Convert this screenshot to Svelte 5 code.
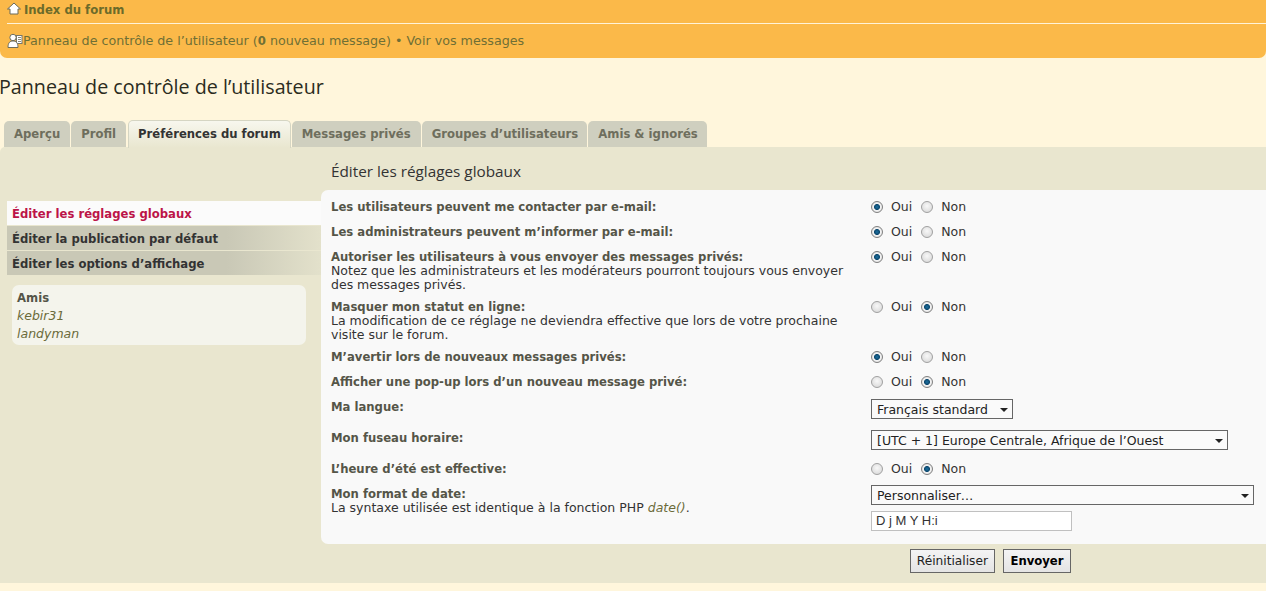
<script>
	const rows = [
		{ label: 'Les utilisateurs peuvent me contacter par e-mail:', kind: 'radio', yes: true },
		{ label: 'Les administrateurs peuvent m’informer par e-mail:', kind: 'radio', yes: true },
		{
			label: 'Autoriser les utilisateurs à vous envoyer des messages privés:',
			note: 'Notez que les administrateurs et les modérateurs pourront toujours vous envoyer des messages privés.',
			kind: 'radio',
			yes: true
		},
		{
			label: 'Masquer mon statut en ligne:',
			note: 'La modification de ce réglage ne deviendra effective que lors de votre prochaine visite sur le forum.',
			kind: 'radio',
			yes: false
		},
		{ label: 'M’avertir lors de nouveaux messages privés:', kind: 'radio', yes: true },
		{ label: 'Afficher une pop-up lors d’un nouveau message privé:', kind: 'radio', yes: false },
		{ label: 'Ma langue:', kind: 'select', value: 'Français standard', size: 'lang' },
		{ label: 'Mon fuseau horaire:', kind: 'select', value: '[UTC + 1] Europe Centrale, Afrique de l’Ouest', size: 'tz' },
		{ label: 'L’heure d’été est effective:', kind: 'radio', yes: false }
	];
	const tabs = ['Aperçu', 'Profil', 'Préférences du forum', 'Messages privés', 'Groupes d’utilisateurs', 'Amis & ignorés'];
	const menu = ['Éditer les réglages globaux', 'Éditer la publication par défaut', 'Éditer les options d’affichage'];
</script>

<div class="page">
	<header class="navbar">
		<div class="crumbs">
			<svg class="home" width="14" height="13" viewBox="0 0 14 13">
				<path d="M7 1 L13.5 7 L11 7 L11 12 L3 12 L3 7 L0.5 7 Z" fill="#fff" stroke="#6a6a58" stroke-width="1" stroke-linejoin="round" />
			</svg>
			<a href="#top">Index du forum</a>
		</div>
		<div class="pm">
			<svg class="ucp" width="16" height="16" viewBox="0 0 16 16">
				<rect x="9.5" y="2.5" width="5.5" height="8" fill="#fff" stroke="#77776a" />
				<path d="M11 4.5h3M11 6.5h3M11 8.5h3" stroke="#8a8a78" />
				<circle cx="6" cy="4.5" r="3.2" fill="#fff" stroke="#6d6d5c" />
				<path d="M1 14.5 C1 9.5 3 8 6 8 C9 8 11 9.5 11 14.5 Z" fill="#fff" stroke="#6d6d5c" />
			</svg>
			<span>Panneau de contrôle de l’utilisateur (<b>0</b> nouveau message) • Voir vos messages</span>
		</div>
	</header>

	<h1>Panneau de contrôle de l’utilisateur</h1>

	<nav class="tabs">
		{#each tabs as tab, i}
			<span class="tab" class:active={i === 2}>{tab}</span>
		{/each}
	</nav>

	<section class="panel">
		<aside class="side">
			<ul class="menu">
				{#each menu as item, i}
					<li class:current={i === 0}>{item}</li>
				{/each}
			</ul>
			<div class="friends">
				<strong>Amis</strong>
				<em>kebir31</em>
				<em>landyman</em>
			</div>
		</aside>

		<div class="main">
			<h2>Éditer les réglages globaux</h2>
			<div class="card">
				{#each rows as row}
					<div class="row" class:tall={row.kind === 'select'}>
						<div class="label">
							<b>{row.label}</b>
							{#if row.note}<p>{row.note}</p>{/if}
						</div>
						<div class="field">
							{#if row.kind === 'radio'}
								<span class="radio" class:on={row.yes}></span><span class="opt">Oui</span>
								<span class="radio" class:on={!row.yes}></span><span class="opt">Non</span>
							{:else}
								<span class="select {row.size}">{row.value}<i></i></span>
							{/if}
						</div>
					</div>
				{/each}
				<div class="row date">
					<div class="label">
						<b>Mon format de date:</b>
						<p>La syntaxe utilisée est identique à la fonction PHP <em>date()</em>.</p>
					</div>
					<div class="field stack">
						<span class="select wide">Personnaliser…<i></i></span>
						<span class="input">D j M Y H:i</span>
					</div>
				</div>
			</div>
			<div class="buttons">
				<button>Réinitialiser</button>
				<button class="send">Envoyer</button>
			</div>
		</div>
	</section>
</div>

<style>
	:global(body) {
		margin: 0;
		background: #fff6dc;
		overflow: hidden;
	}

	.page {
		font-family: 'DejaVu Sans', Verdana, sans-serif;
		font-size: 12.5px;
		color: #333;
		height: 591px;
		overflow: hidden;
	}

	b,
	strong {
		font-size: 11.65px;
	}

	.navbar {
		background: #fbb949;
		height: 58px;
		box-sizing: border-box;
		border-radius: 0 0 7px 7px;
		padding-left: 7px;
		color: #6b6b2a;
	}

	.crumbs {
		height: 24px;
		border-bottom: 1px solid #fff3d8;
		display: flex;
		align-items: center;
		gap: 3px;
		padding-bottom: 3px;
		box-sizing: border-box;
	}

	.home {
		margin-top: -3px;
	}

	.crumbs a {
		font-weight: bold;
		font-size: 11.65px;
		color: #6b6b2a;
		text-decoration: none;
	}

	.pm {
		display: flex;
		align-items: center;
		height: 33px;
		font-size: 12.7px;
		color: #6f6f35;
	}

	h1 {
		font-family: 'Open Sans', sans-serif;
		font-weight: 400;
		font-size: 19.7px;
		line-height: 24px;
		margin: 17px 0 21px -1px;
		color: #2b2b20;
	}

	.tabs {
		display: flex;
		gap: 1px;
		padding-left: 4px;
		height: 27px;
		align-items: flex-end;
	}

	.tab {
		background: #cfcfbf;
		color: #6e6e5d;
		font-weight: bold;
		font-size: 11.65px;
		height: 26px;
		line-height: 26px;
		padding: 0 10px;
		border-radius: 5px 5px 0 0;
	}

	.tab.active {
		height: 28px;
		line-height: 27px;
		padding: 0 9px;
		margin-left: 1px;
		color: #333;
		background: linear-gradient(#f7f7ee, #e9e6cf);
		border: 1px solid #d5d5c3;
		border-bottom: 0;
		box-sizing: border-box;
		position: relative;
		margin-bottom: -1px;
	}

	.tab:nth-child(5),
	.tab:nth-child(6) {
		padding-right: 9px;
	}

	.panel {
		display: flex;
		background: #e9e6cf;
		height: 436px;
		border-radius: 5px 0 0 0;
	}

	.side {
		width: 321px;
		flex: none;
		padding: 54px 0 0 7px;
		box-sizing: border-box;
	}

	.menu {
		list-style: none;
		margin: 0;
		padding: 0;
	}

	.menu li {
		height: 24px;
		line-height: 26px;
		margin-bottom: 1px;
		padding-left: 5px;
		font-weight: bold;
		font-size: 11.65px;
		color: #333;
		background: linear-gradient(90deg, #c9c8b6 70%, #e3e1cb);
	}

	.menu li.current {
		background: #fbfbfb;
		color: #bc1448;
	}

	.friends {
		margin: 10px 15px 0 5px;
		height: 60px;
		box-sizing: border-box;
		padding: 4px 5px;
		background: #f4f4ec;
		border-radius: 7px;
		display: flex;
		flex-direction: column;
		line-height: 18px;
	}

	.friends strong {
		color: #555548;
	}

	.friends em {
		color: #6b6b3a;
	}

	.main {
		flex: 1;
		min-width: 0;
	}

	h2 {
		font-family: 'Open Sans', sans-serif;
		font-weight: 400;
		font-size: 15.3px;
		line-height: 20px;
		margin: 14px 0 9px 10px;
		color: #333;
	}

	.card {
		background: #f9f9f9;
		border-radius: 7px 0 0 7px;
		height: 354px;
		padding: 10px 0 0 10px;
		box-sizing: border-box;
	}

	.row {
		display: flex;
		min-height: 17px;
		margin-bottom: 8px;
	}

	.row.tall {
		min-height: 23px;
	}

	.label {
		width: 520px;
		margin-right: 20px;
		flex: none;
		line-height: 14px;
	}

	.label b {
		color: #555548;
	}

	.label p {
		margin: 0;
	}

	.label em {
		color: #6b6b3a;
	}

	.field {
		display: flex;
		align-items: center;
		height: 14px;
		color: #333;
	}

	.stack {
		flex-direction: column;
		align-items: flex-start;
		gap: 6px;
		height: auto;
		margin-top: -1px;
	}

	.radio {
		width: 12px;
		height: 12px;
		box-sizing: border-box;
		border-radius: 50%;
		border: 1px solid #a0a0a0;
		background: radial-gradient(circle at 50% 40%, #f8f8f8, #d4d4d4);
		display: inline-block;
		flex: none;
	}

	.radio.on {
		background: radial-gradient(circle at 50% 50%, #1a6f9f 0, #0f4a70 2.6px, #f4f4f4 3.4px, #ddd 6px);
		border-color: #808080;
	}

	.opt {
		margin: 0 9px 0 8px;
		padding-bottom: 2px;
	}

	.select {
		position: relative;
		display: inline-block;
		height: 20px;
		line-height: 19px;
		box-sizing: border-box;
		border: 1px solid #666;
		background: #fafafa;
		padding-left: 4px;
		color: #222;
	}

	.field > .select {
		margin-top: -1px;
		align-self: flex-start;
	}

	.select i {
		position: absolute;
		right: 4px;
		top: 8px;
		border: 4px solid transparent;
		border-top: 4px solid #222;
		border-bottom: 0;
	}

	.lang {
		width: 142px;
		padding-left: 5px;
	}

	.tz {
		width: 357px;
		padding-left: 5px;
	}

	.wide {
		width: 383px;
		padding-left: 5px;
	}

	.input {
		display: block;
		width: 201px;
		height: 20px;
		line-height: 18px;
		box-sizing: border-box;
		border: 1px solid #c0c0c0;
		background: #fff;
		padding-left: 4px;
		color: #333;
		font-family: 'Liberation Sans', sans-serif;
		font-size: 13px;
	}

	.buttons {
		display: flex;
		justify-content: flex-end;
		gap: 8px;
		padding: 5px 195px 0 0;
	}

	button {
		height: 24px;
		padding: 0 6px;
		font: inherit;
		font-size: 12.2px;
		color: #222;
		border: 1px solid #666;
		background: linear-gradient(#f4f4f4, #e4e4e4);
	}

	.send {
		font-weight: bold;
		font-size: 11.65px;
		padding: 0 6.5px;
		color: #000;
	}
</style>
